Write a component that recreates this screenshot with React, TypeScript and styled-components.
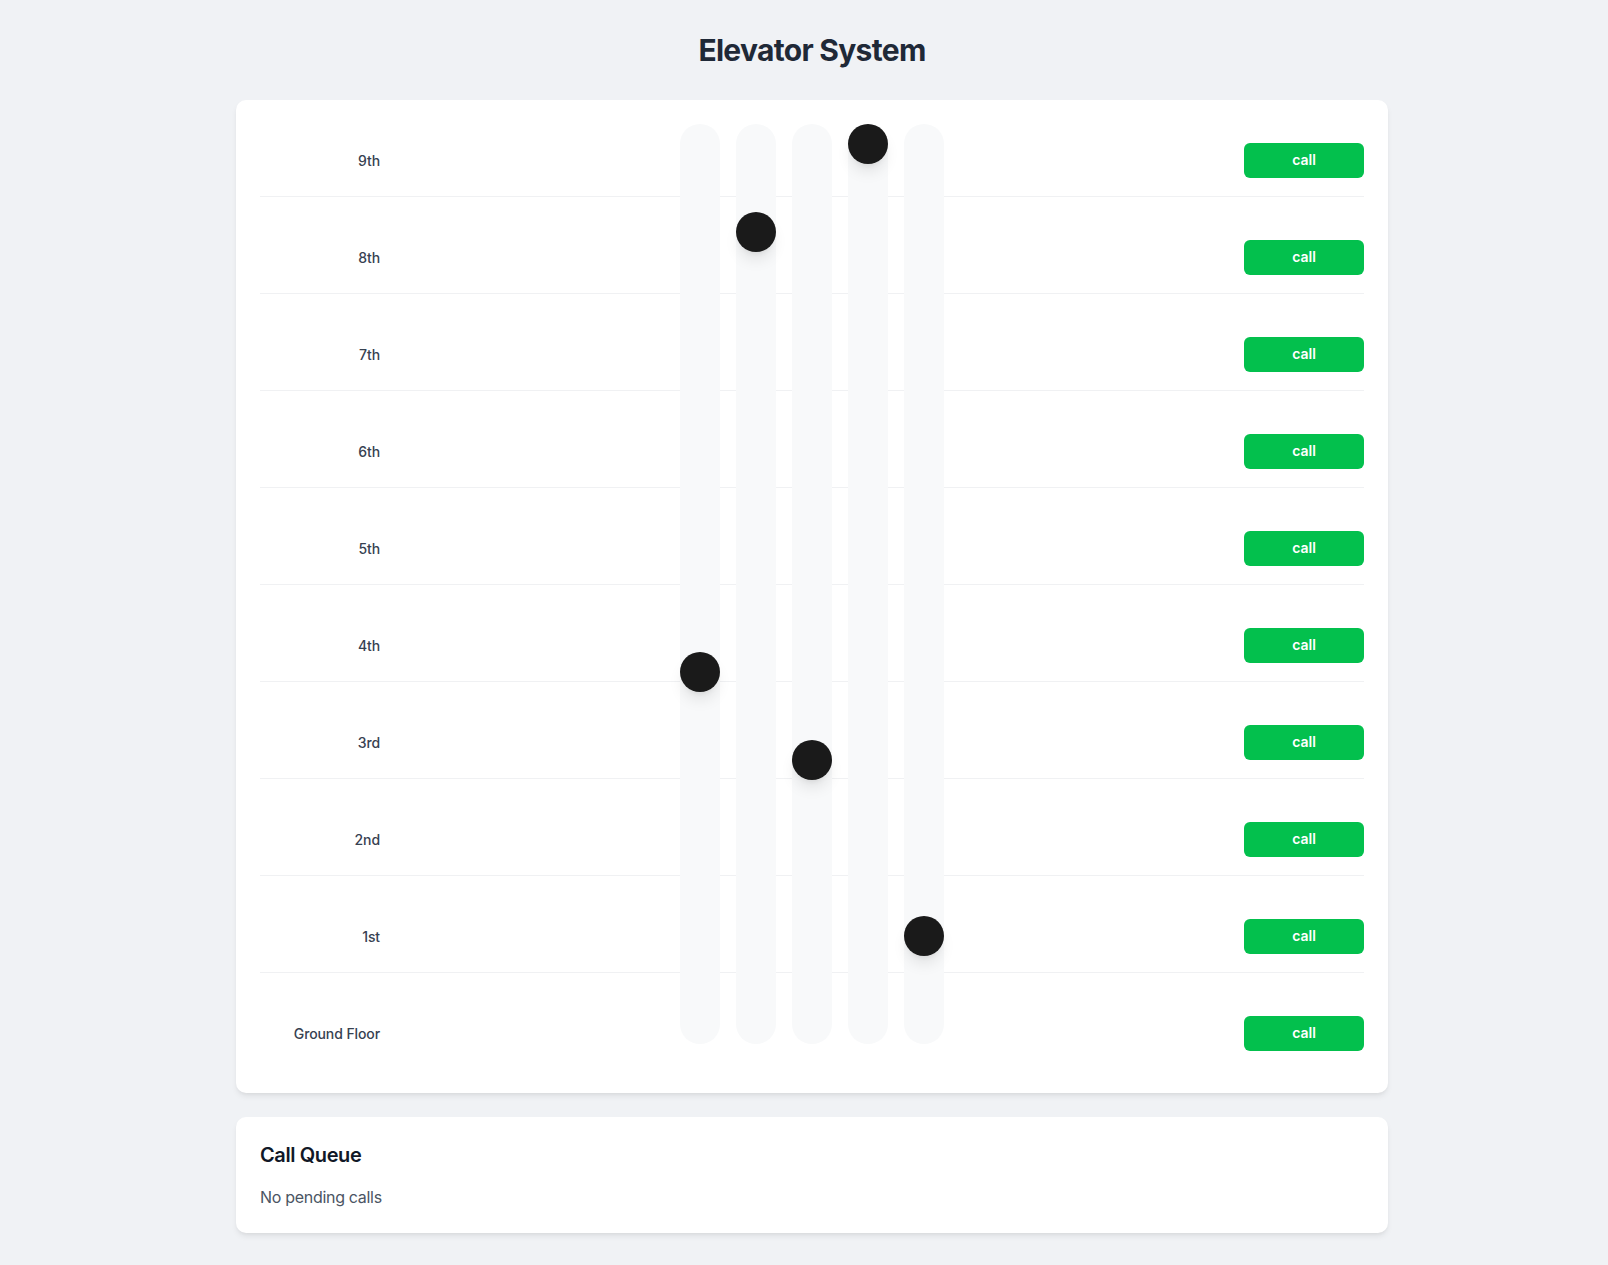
import React from 'react';
import styled, { createGlobalStyle } from 'styled-components';

const floors = ['9th', '8th', '7th', '6th', '5th', '4th', '3rd', '2nd', '1st', 'Ground Floor'];

// floor index each car sits on (0 = ground)
const elevators = [3, 8, 2, 9, 0];

const FLOOR_STEP = 88;
const TOP_FLOOR = 9;

const GlobalStyle = createGlobalStyle`
  body {
    margin: 8px;
    background: #f0f2f5;
    font-family: Inter, "Noto Sans", "Liberation Sans", sans-serif;
    -webkit-font-smoothing: antialiased;
  }
`;

const Page = styled.div`
  width: 100vw;
  box-sizing: border-box;
  padding: 24px 0;
  display: flex;
  flex-direction: column;
  align-items: center;
`;

const Heading = styled.h1`
  margin: 0 0 32px;
  font-size: 30px;
  line-height: 36px;
  font-weight: 700;
  letter-spacing: -0.7px;
  color: #1f2937;
`;

const Card = styled.section`
  position: relative;
  width: 1152px;
  box-sizing: border-box;
  padding: 24px;
  background: #fff;
  border-radius: 10px;
  box-shadow: 0 4px 6px -1px rgba(0, 0, 0, 0.08), 0 2px 4px -2px rgba(0, 0, 0, 0.06);

  & + & {
    margin-top: 24px;
  }
`;

const FloorList = styled.div`
  display: flex;
  flex-direction: column;
  gap: 24px;
`;

const FloorRow = styled.div`
  height: 72px;
  display: flex;
  align-items: center;
  justify-content: space-between;
  border-bottom: 1px solid #f0f1f3;

  &:last-child {
    border-bottom: none;
  }
`;

const FloorLabel = styled.span`
  width: 120px;
  padding-top: 2px;
  text-align: right;
  font-size: 14px;
  line-height: 20px;
  font-weight: 500;
  letter-spacing: -0.1px;
  color: #374151;
`;

const CallButton = styled.button`
  width: 120px;
  height: 35px;
  padding: 0 0 2px;
  border: none;
  border-radius: 6px;
  background: #03c04d;
  color: #fff;
  font-family: inherit;
  font-size: 14px;
  font-weight: 600;
  cursor: pointer;
`;

const Shafts = styled.div`
  position: absolute;
  top: 24px;
  left: 50%;
  transform: translateX(-50%);
  display: flex;
  gap: 16px;
`;

const Track = styled.div`
  position: relative;
  width: 40px;
  height: 920px;
  border-radius: 20px;
  background: #f8f9fa;
`;

const Car = styled.div<{ $offset: number }>`
  position: absolute;
  left: 0;
  top: ${({ $offset }) => $offset}px;
  width: 40px;
  height: 40px;
  border-radius: 50%;
  background: #1a1a1a;
  box-shadow: 0 10px 15px -3px rgba(0, 0, 0, 0.1), 0 4px 6px -4px rgba(0, 0, 0, 0.1);
`;

const QueueTitle = styled.h2`
  margin: 0 0 16px;
  font-size: 20px;
  line-height: 28px;
  font-weight: 600;
  letter-spacing: -0.4px;
  color: #111827;
`;

const QueueEmpty = styled.p`
  margin: 0;
  font-size: 16px;
  line-height: 24px;
  letter-spacing: -0.3px;
  color: #4b5563;
`;

const App = () => {
  return (
    <>
      <GlobalStyle />
      <Page>
        <Heading>Elevator System</Heading>
        <Card>
          <FloorList>
            {floors.map((name) => (
              <FloorRow key={name}>
                <FloorLabel>{name}</FloorLabel>
                <CallButton>call</CallButton>
              </FloorRow>
            ))}
          </FloorList>
          <Shafts>
            {elevators.map((floor, i) => (
              <Track key={i}>
                <Car $offset={(TOP_FLOOR - floor) * FLOOR_STEP} />
              </Track>
            ))}
          </Shafts>
        </Card>
        <Card>
          <QueueTitle>Call Queue</QueueTitle>
          <QueueEmpty>No pending calls</QueueEmpty>
        </Card>
      </Page>
    </>
  );
};

export default App;
